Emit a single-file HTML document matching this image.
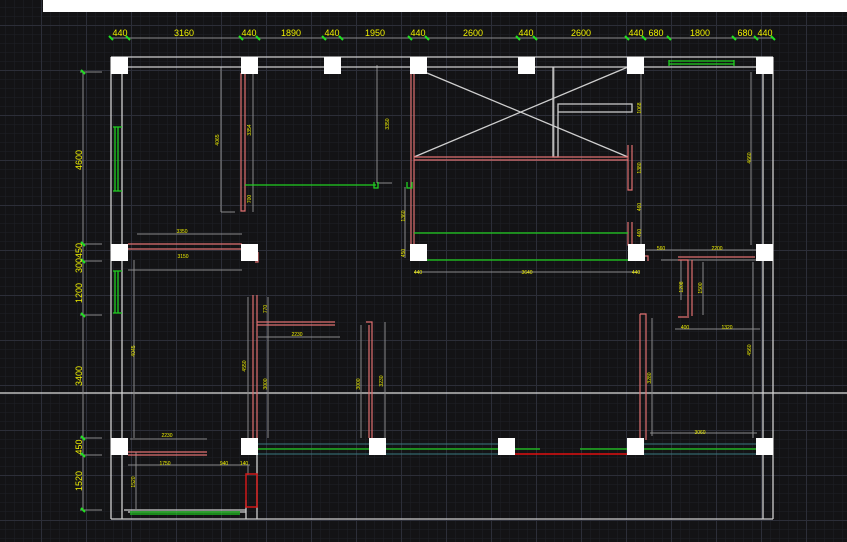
<!DOCTYPE html><html><head><style>body{margin:0;background:#131315;width:847px;height:542px;overflow:hidden}svg{display:block}text{font-family:"Liberation Sans",sans-serif;fill:#f0f000}</style></head><body>
<svg width="847" height="542" viewBox="0 0 847 542">
<defs>
<pattern id="mn" width="9" height="9" patternUnits="userSpaceOnUse" x="5" y="7"><path d="M0 0H9M0 0V9" stroke="#1f2026" stroke-width="1"/></pattern>
<pattern id="mj" width="45" height="45" patternUnits="userSpaceOnUse" x="41" y="25"><path d="M0 .5H45M.5 0V45" stroke="#2c2e38" stroke-width="1"/></pattern>
</defs>
<rect width="847" height="542" fill="#131315"/>
<rect width="847" height="542" fill="url(#mn)"/>
<rect width="847" height="542" fill="url(#mj)"/>
<rect x="43" y="0" width="804" height="12" fill="#fff"/>
<line x1="0" y1="393" x2="847" y2="393" stroke="#ddd" stroke-width="1.2"/>
<!-- dimension lines -->
<g stroke="#8a8a8a" stroke-width="1" fill="none">
<line x1="111" y1="38" x2="773" y2="38"/>
<line x1="83" y1="72" x2="83" y2="510"/>
<path d="M80 72H102M80 244H102M80 261H102M80 315H102M80 438H102M80 455H102M80 510H102"/>
<path d="M221 67V212M221 212H235M253 72V212M377 65V183M377 183H392M405 187V258M134 260V438M137 234H242M128 270H242"/>
<path d="M554 67V157M554 67H558M221 67V212"/>
<path d="M641 72V245M751 72V245M646 250H760M661 260H756M681 260V300M703 262V315M675 329H760M753 262V438M652 318V436M650 433H757M130 439H207M128 465H240M240 465H250M136 452V509M248 465V475"/>
<path d="M248 297V438M268 297V438M258 337H340M361 325V438M385 322V438M414 272H640"/>
</g>
<!-- outer walls -->
<g stroke="#cfcfcf" stroke-width="1.3" fill="none">
<path d="M111 57H773M111 67H773M111 57V519M122 67V519M763 67V519M773 57V519M111 519H773"/>
<path d="M128 512H246V519M124 510H246V515M246 500V519M257 455V519"/>
<path d="M553 67V157H558V104H632V112M558 112H632V104"/>
<path d="M414 157L628 67M427 73L628 157"/>
</g>
<!-- red walls -->
<g stroke="#e07070" stroke-width="1.2" fill="none">
<path d="M241 73V211H245V73M128 244H242M128 249H242M258 252V262H255"/>
<path d="M411 73V246M414 73V246M414 157H628M414 160H628M628 145V190H632V145"/>
<path d="M628 222V245H632V222"/>
<path d="M253 295V438M257 295V438M257 322H335M257 325H335M366 322H372V438M369 325V438"/>
<path d="M640 314H646V440M640 314V440M678 257H755M678 260H688V316M692 260V316M678 317H689"/>
<path d="M128 452H207M128 455H207M644 256H648V261"/>
</g>
<rect x="246" y="474" width="11" height="33" fill="none" stroke="#d01818" stroke-width="1.5"/>
<line x1="515" y1="454" x2="628" y2="454" stroke="#e01010" stroke-width="1.5"/>
<!-- green -->
<g stroke="#20d020" stroke-width="1.3" fill="none">
<path d="M115 127V191M118 127V191M113 127H122M113 191H122"/>
<path d="M115 271V313M118 271V313M113 271H122M113 313H122"/>
<path d="M669 60V66M734 60V66M669 61H734M669 64H734"/>
<path d="M245 185H376M374 182V188H378V182M407 182V188H412V182"/>
<path d="M414 233H628M426 260H628"/>
<path d="M258 449H369M386 449H498M515 449H540M580 449H627M644 449H756"/>
<path d="M130 512H240M130 514H240"/>
</g>
<g stroke="#3a7a80" stroke-width="1" fill="none">
<path d="M258 444H369M258 454H369M386 444H498M386 454H498M644 444H756M644 454H756"/>
</g>
<!-- columns -->
<g fill="#fff">
<rect x="111" y="57" width="17" height="17"/><rect x="241" y="57" width="17" height="17"/><rect x="324" y="57" width="17" height="17"/><rect x="410" y="57" width="17" height="17"/><rect x="518" y="57" width="17" height="17"/><rect x="627" y="57" width="17" height="17"/><rect x="756" y="57" width="17" height="17"/>
<rect x="111" y="244" width="17" height="17"/><rect x="241" y="244" width="17" height="17"/><rect x="410" y="244" width="17" height="17"/><rect x="628" y="244" width="17" height="17"/><rect x="756" y="244" width="17" height="17"/>
<rect x="111" y="438" width="17" height="17"/><rect x="241" y="438" width="17" height="17"/><rect x="369" y="438" width="17" height="17"/><rect x="498" y="438" width="17" height="17"/><rect x="627" y="438" width="17" height="17"/><rect x="756" y="438" width="17" height="17"/>
</g>
<!-- ticks -->
<g stroke="#20e020" stroke-width="2">
<path d="M109 36l4 4M126 36l4 4M239 36l4 4M256 36l4 4M322 36l4 4M339 36l4 4M408 36l4 4M425 36l4 4M516 36l4 4M533 36l4 4M625 36l4 4M642 36l4 4M667 36l4 4M732 36l4 4M754 36l4 4M771 36l4 4"/>
<path d="M81 70l4 4M81 242l4 4M81 259l4 4M81 313l4 4M81 436l4 4M81 453l4 4M81 508l4 4"/>
</g>
<!-- top dims -->
<g font-size="9" text-anchor="middle">
<text x="120" y="36">440</text><text x="184" y="36">3160</text><text x="249" y="36">440</text><text x="291" y="36">1890</text><text x="332" y="36">440</text><text x="375" y="36">1950</text><text x="418" y="36">440</text><text x="473" y="36">2600</text><text x="526" y="36">440</text><text x="581" y="36">2600</text><text x="636" y="36">440</text><text x="656" y="36">680</text><text x="700" y="36">1800</text><text x="745" y="36">680</text><text x="765" y="36">440</text>
</g>
<g font-size="9" text-anchor="middle">
<text transform="translate(82,160) rotate(-90)">4600</text>
<text transform="translate(82,258) rotate(-90)">300450</text>
<text transform="translate(82,293) rotate(-90)">1200</text>
<text transform="translate(82,376) rotate(-90)">3400</text>
<text transform="translate(82,447) rotate(-90)">450</text>
<text transform="translate(82,481) rotate(-90)">1520</text>
</g>
<g font-size="5" text-anchor="middle">
<text x="182" y="233">3350</text><text x="183" y="258">3150</text><text x="418" y="274">440</text><text x="527" y="274">3640</text><text x="636" y="274">440</text><text x="661" y="250">560</text><text x="717" y="250">2200</text>
<text x="167" y="437">2230</text><text x="165" y="465">1750</text><text x="224" y="465">940</text><text x="244" y="465">140</text>
<text x="297" y="336">2230</text><text x="700" y="434">3060</text><text x="685" y="329">400</text><text x="727" y="329">1320</text>
<text transform="translate(219,140) rotate(-90)">4065</text><text transform="translate(251,130) rotate(-90)">3354</text><text transform="translate(251,199) rotate(-90)">700</text>
<text transform="translate(389,124) rotate(-90)">3350</text><text transform="translate(405,216) rotate(-90)">1360</text><text transform="translate(405,253) rotate(-90)">450</text>
<text transform="translate(641,108) rotate(-90)">1068</text><text transform="translate(641,168) rotate(-90)">1380</text><text transform="translate(641,207) rotate(-90)">460</text><text transform="translate(641,233) rotate(-90)">460</text>
<text transform="translate(751,158) rotate(-90)">4660</text><text transform="translate(135,351) rotate(-90)">4045</text><text transform="translate(246,366) rotate(-90)">4550</text><text transform="translate(267,309) rotate(-90)">770</text>
<text transform="translate(267,384) rotate(-90)">3000</text><text transform="translate(360,384) rotate(-90)">3000</text><text transform="translate(383,381) rotate(-90)">3230</text>
<text transform="translate(651,378) rotate(-90)">3280</text><text transform="translate(683,287) rotate(-90)">1208</text><text transform="translate(702,288) rotate(-90)">1500</text><text transform="translate(751,350) rotate(-90)">4560</text><text transform="translate(135,482) rotate(-90)">1520</text>
</g>
</svg>
</body></html>
